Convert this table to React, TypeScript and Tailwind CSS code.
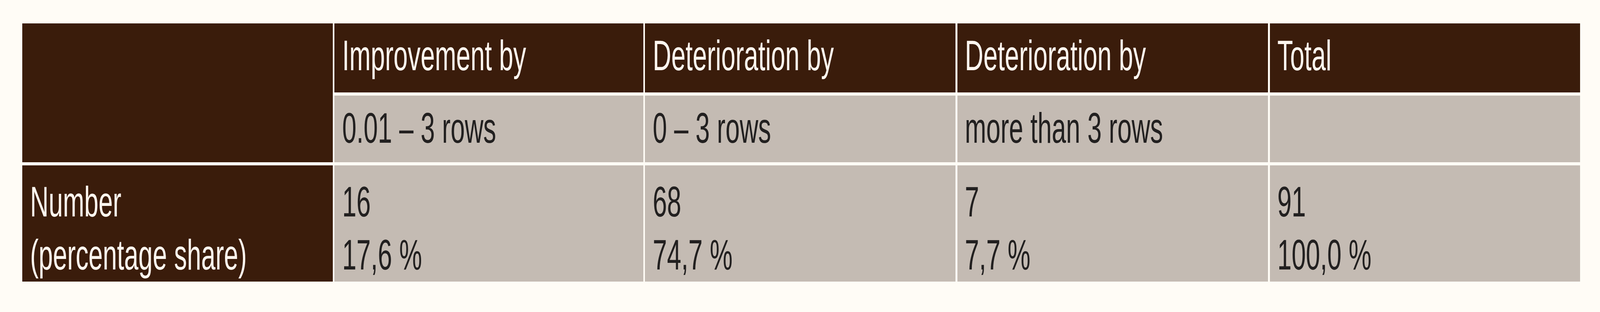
import React from "react";

const REF_W = 6800;

function T({ children, k }: { children: React.ReactNode; k: number }) {
  return (
    <span
      className="block w-0 whitespace-nowrap origin-left"
      style={{ transform: `scaleX(${k})` }}
    >
      {children}
    </span>
  );
}

const head = "min-w-0 bg-[#3a1c0b] text-[#fdf6ef] pl-[2.43%]";
const sub = "min-w-0 bg-[#c4bbb3] text-[#222020] pl-[2.43%]";

export default function App() {
  const vw = typeof window !== "undefined" ? window.innerWidth : REF_W;
  const k = Math.min(1, vw / REF_W);

  const cols: { h: string; s: string; n: string; p: string }[] = [
    { h: "Improvement by", s: "0.01 – 3 rows", n: "16", p: "17,6 %" },
    { h: "Deterioration by", s: "0 – 3 rows", n: "68", p: "74,7 %" },
    { h: "Deterioration by", s: "more than 3 rows", n: "7", p: "7,7 %" },
    { h: "Total", s: "", n: "91", p: "100,0 %" },
  ];

  return (
    <div className="w-full h-[800px] bg-[#fffcf6] pt-[60px] font-['Liberation_Sans',Arial,sans-serif] text-[109px] leading-[136px]">
      <div className="ml-[1.382vw] w-[97.38vw] grid grid-cols-[minmax(0,1319fr)_minmax(0,1311fr)_minmax(0,1319fr)_minmax(0,1319fr)_minmax(0,1318fr)] grid-rows-[177px_171px_298px] gap-y-[8px] gap-x-[0.1208%]">
        <div className="row-span-2 min-w-0 bg-[#3a1c0b]" />
        {cols.map((c, i) => (
          <div key={`h${i}`} className={`${head} pt-[14px]`}>
            <T k={k}>{c.h}</T>
          </div>
        ))}
        {cols.map((c, i) => (
          <div key={`s${i}`} className={`${sub} pt-[15px]`}>
            {c.s ? <T k={k}>{c.s}</T> : null}
          </div>
        ))}
        <div className="min-w-0 bg-[#3a1c0b] text-[#fdf6ef] pl-[2.58%] pt-[25px]">
          <T k={k}>Number</T>
          <T k={k}>(percentage share)</T>
        </div>
        {cols.map((c, i) => (
          <div key={`d${i}`} className={`${sub} pt-[25px]`}>
            <T k={k}>{c.n}</T>
            <T k={k}>{c.p}</T>
          </div>
        ))}
      </div>
    </div>
  );
}
